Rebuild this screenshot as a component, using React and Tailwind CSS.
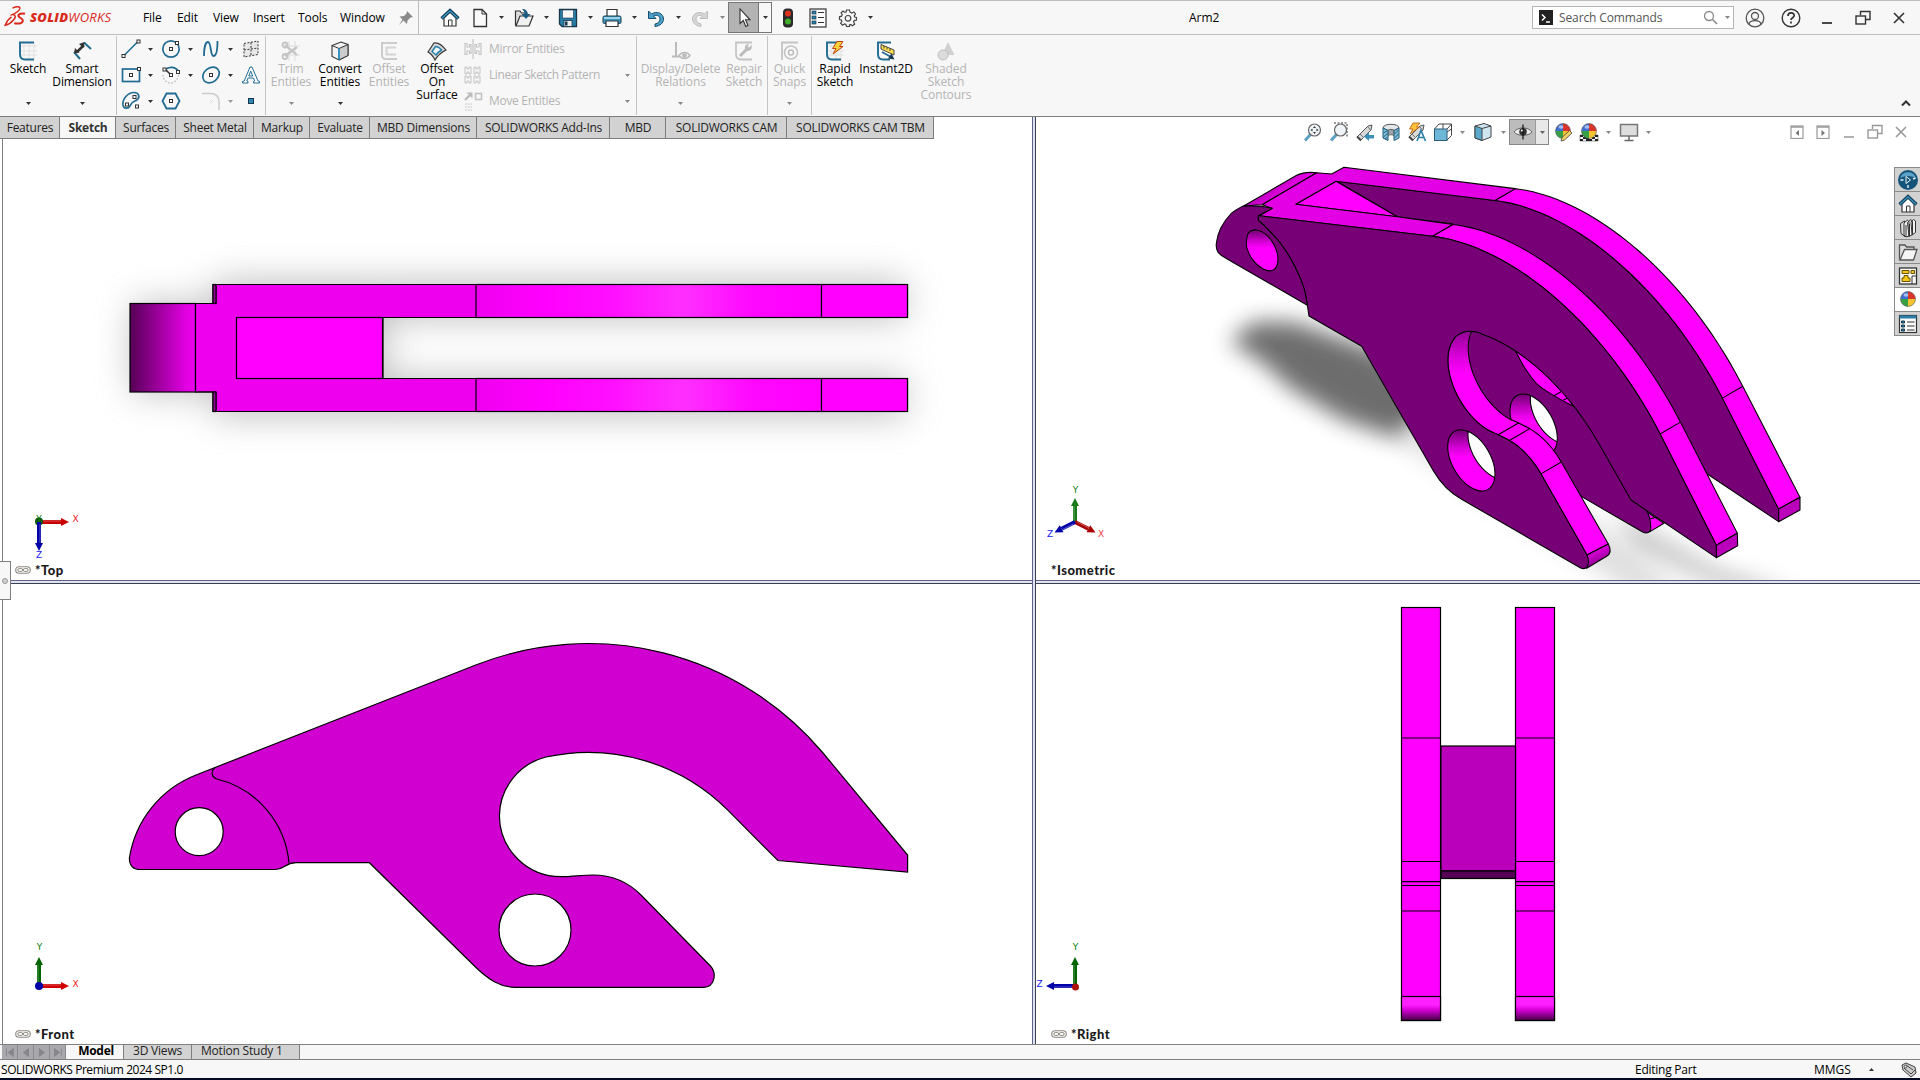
import React from "react";

/* ---------- helpers ---------- */

// Smooth open curve (Catmull-Rom turned into cubic segments) through a list of points.
function curve(pts, join = "M") {
  let d = `${join}${pts[0][0]} ${pts[0][1]}`;
  for (let i = 0; i < pts.length - 1; i++) {
    const p0 = pts[i - 1] || pts[i];
    const p1 = pts[i];
    const p2 = pts[i + 1];
    const p3 = pts[i + 2] || p2;
    d += `C${p1[0] + (p2[0] - p0[0]) / 6} ${p1[1] + (p2[1] - p0[1]) / 6} ${p2[0] - (p3[0] - p1[0]) / 6} ${p2[1] - (p3[1] - p1[1]) / 6} ${p2[0]} ${p2[1]}`;
  }
  return d;
}
const rev = (a) => [...a].reverse();
const shift = (a, dx, dy) => a.map(([x, y]) => [x + dx, y + dy]);

// Points of a circular arc in the plane of the front profile, angles in degrees.
function arc(cx, cy, r, a0, a1, n = 14) {
  return Array.from({ length: n + 1 }, (_, i) => {
    const a = ((a0 + ((a1 - a0) * i) / n) * Math.PI) / 180;
    return [cx + r * Math.cos(a), cy + r * Math.sin(a)];
  });
}
// Front profile plane -> isometric drawing plane.
const toIso = (pts) =>
  pts.map(([x, y]) => [698 + 1.973 * (x - 476.4), 259 + 1.139 * (x - 476.4) + 2.282 * (y - 664.8)]);

function Caret({ className = "text-[#333]" }) {
  return (
    <svg width="5" height="3" viewBox="0 0 5 3" className={"shrink-0 " + className}>
      <path d="M0 0H5L2.5 3Z" fill="currentColor" />
    </svg>
  );
}

function Ico({ s = 20, vb = 20, children, className = "" }) {
  return (
    <svg width={s} height={s} viewBox={`0 0 ${vb} ${vb}`} fill="none" className={"shrink-0 " + className}>
      {children}
    </svg>
  );
}

/* ---------- icons ---------- */
const B = "#226c93";
const K = "#333";

const Home = ({ s = 20 }) => (
  <Ico s={s}>
    <path d="M4 10V18H16V10L10 4Z" fill="#fff" stroke={K} strokeWidth="1.2" />
    <path d="M8.5 18V12H12V18" stroke={K} />
    <path d="M1.5 10.5L10 2.5L18.5 10.5" stroke="#123e58" strokeWidth="3.2" />
    <path d="M2 10.3L10 2.8L18 10.3" stroke="#3b9ac4" strokeWidth="1.2" />
  </Ico>
);
const Doc = () => (
  <Ico>
    <path d="M4 1.5H12L16.5 6V18.5H4Z" fill="#fafafa" stroke={K} strokeWidth="1.3" />
    <path d="M12 1.5V6H16.5" stroke={K} strokeWidth="1" />
  </Ico>
);
const Open = () => (
  <Ico>
    <path d="M1.5 17.5V3H6L7.5 5H13V8" fill="#ddd" stroke={K} strokeWidth="1.2" />
    <path d="M2 18L6 8H19L15 18Z" fill="#f1f1f1" stroke={K} strokeWidth="1.2" />
    <path d="M8 1C12 1 13.500 3 13.500 6H16.500L12 11L7.500 6H10.500C10.500 4 10 2.500 8 1Z" fill="#1c5c82" />
  </Ico>
);
const Save = () => (
  <Ico>
    <path d="M1.500 1.500H18.500V18.500H4L1.500 16Z" fill="#2a7fa8" stroke="#17384c" strokeWidth="1.300" />
    <rect x="4.500" y="2" width="11" height="8" fill="#fafafa" stroke="#17384c" strokeWidth=".6" />
    <rect x="6" y="12.500" width="8" height="6" fill="#eee" stroke="#17384c" strokeWidth=".8" />
    <rect x="7" y="13.500" width="2.500" height="4" fill="#17384c" />
  </Ico>
);
const Print = () => (
  <Ico>
    <path d="M5 8V1.500H15V8" fill="#fff" stroke={K} strokeWidth="1.200" />
    <rect x="1" y="8" width="18" height="7.500" rx="1.500" fill="#3b9ac4" stroke="#17384c" />
    <path d="M2 10H18" stroke="#bfe2f2" strokeWidth="1.500" />
    <path d="M4 13H16V18.500H4Z" fill="#fff" stroke={K} strokeWidth="1.200" />
  </Ico>
);
const Undo = ({ gray }) => (
  <Ico className={gray ? "-scale-x-100" : ""}>
    <path
      d="M2.500 3V10.500H10L7.500 8C11 6 14 8 14 11C14 13.500 12 15.500 9 16V18.500C14 18 17.500 15 17.500 11C17.500 5.500 11 2.500 5.500 6Z"
      fill={gray ? "#d6d6d6" : "#4aa3cc"}
      stroke={gray ? "#bdbdbd" : "#1c4d69"}
    />
  </Ico>
);
const Cursor = () => (
  <Ico>
    <path d="M6 1V15.500L9.300 12.500L11.800 18.500L14 17.500L11.500 11.800H16Z" fill="#fff" stroke="#333" strokeWidth="1.100" />
  </Ico>
);
const Lights = () => (
  <Ico>
    <rect x="5" y=".5" width="10" height="19" rx="4" fill="#2b2b2b" />
    <circle cx="10" cy="5.500" r="3" fill="#e0301e" />
    <circle cx="10" cy="13.500" r="3" fill="#3fae2a" />
  </Ico>
);
const Props = () => (
  <Ico>
    <rect x="2" y="1" width="16" height="18" fill="#fdfdfd" stroke={K} strokeWidth="1.200" />
    {[4, 9, 14].map((y) => (
      <g key={y}>
        <rect x="4" y={y - 1} width="4" height="3" fill="#2a7fa8" stroke="#17384c" strokeWidth=".7" />
        <path d={`M10 ${y + 0.5}H16`} stroke={K} />
      </g>
    ))}
  </Ico>
);
const Gear = () => (
  <Ico>
    <path
      d="M8.500 2H11.500L12.100 4.200L13.800 5L15.900 3.900L17.500 6L16.200 7.900L16.700 9L18.500 9.500V12L16.200 12.600L15.600 14L16.700 16L14.500 17.800L12.700 16.500L11.500 17V18.500H8.500L7.900 16.500L6.500 16L4.500 17.200L2.700 15.200L3.900 13.300L3.300 12L1.500 11.500V8.800L3.600 8.200L4.200 6.800L3.100 4.900L5 3L7 4.400L8 4Z"
      stroke="#444"
      strokeWidth="1.200"
    />
    <circle cx="10" cy="10.300" r="2.800" stroke="#444" strokeWidth="1.200" />
  </Ico>
);
const Pt = ({ x, y }) => <rect x={x - 1.5} y={y - 1.5} width="3" height="3" fill="#fff" stroke={K} />;

const LineI = () => (
  <Ico>
    <path d="M2.500 17L17.500 2" stroke={B} strokeWidth="1.600" />
    <Pt x={2.5} y={17} />
    <Pt x={17.5} y={2.5} />
  </Ico>
);
const CircleI = () => (
  <Ico>
    <circle cx="10" cy="10" r="8.200" stroke={B} strokeWidth="1.700" />
    <Pt x={10} y={10} />
    <Pt x={16} y={4} />
  </Ico>
);
const SplineI = () => (
  <Ico>
    <path d="M3 17C3 9 4.500 3 7 3C10.500 3 9 17 12.500 17C15.500 17 16.500 10 16.500 2" stroke={B} strokeWidth="1.800" />
  </Ico>
);
const PlaneI = () => (
  <Ico>
    <path d="M3 4.500L17 2V15.500L3 18Z" fill="#e8e8e8" stroke={K} strokeDasharray="2 1.500" />
    <path d="M10 3.500V17M3 11L17 9" stroke={K} strokeDasharray="2 1.500" />
  </Ico>
);
const RectI = () => (
  <Ico>
    <rect x="1.500" y="4" width="17" height="12.500" stroke={B} strokeWidth="1.700" />
    <Pt x={10} y={10} />
    <Pt x={18} y={4} />
  </Ico>
);
const ArcI = () => (
  <Ico>
    <path d="M4 5C8 1 15 1.500 17.500 7" stroke={B} strokeWidth="1.700" />
    <path d="M17.500 10C17 15 13 18 9.500 18C5.500 18 2 14.500 2 10" stroke="#bbb" strokeWidth="1.400" strokeDasharray="1.500 1.800" />
    <path d="M4 4L9 9" stroke={K} strokeWidth="1.600" />
    <Pt x={3.5} y={4.5} />
    <Pt x={10} y={10} />
    <Pt x={17} y={7} />
  </Ico>
);
const EllI = () => (
  <Ico>
    <ellipse cx="10" cy="10" rx="9" ry="7" transform="rotate(-40 10 10)" stroke={B} strokeWidth="1.700" />
    <Pt x={10} y={10} />
  </Ico>
);
const TextI = () => (
  <Ico>
    <path d="M1.500 18H7V16.500L5.800 16L7 13H12.500L13.700 16L12.500 16.500V18H18.500V16.500L17 16L11 2H9L3.200 16L1.500 16.500ZM7.800 11L9.700 6L11.700 11Z" fill="#fff" stroke={B} />
  </Ico>
);
const SlotI = () => (
  <Ico>
    <path d="M2 14C1 8 7 1.500 13 1.500C18 1.500 19 6 16.500 8.500C14 10.500 11 10.500 9.500 14C8 18 3 18.500 2 14Z" stroke={B} strokeWidth="1.700" />
    <Pt x={13.500} y={6} />
    <Pt x={6} y={13.500} />
    <Pt x={16} y={15.500} />
  </Ico>
);
const HexI = () => (
  <Ico>
    <path d="M5.500 2.500H14.500L18.500 10L14.500 17.500H5.500L1.500 10Z" stroke={B} strokeWidth="1.800" />
    <Pt x={10} y={10} />
  </Ico>
);
const FilletI = () => (
  <Ico>
    <path d="M1 2.500H9C15 2.500 18 6 18 11V19" stroke="#ccc" strokeWidth="1.600" />
    <path d="M9 9L12 12M12 9L9 12" stroke="#ddd" />
  </Ico>
);
const DotI = () => (
  <Ico>
    <rect x="7.500" y="7.500" width="5" height="5" fill="#2f88b3" stroke="#17384c" />
  </Ico>
);

const SketchI = ({ children }) => (
  <Ico>
    <path d="M6 1V14M11 1V19M16 1V19M3 5H19M3 10H19M3 14H19" stroke="#ddd" strokeWidth=".8" />
    <path d="M16 1.500H2V13C2 16.500 3.500 18.500 7 18.500H16" stroke={B} strokeWidth="1.900" />
    {children}
  </Ico>
);
const SmartI = () => (
  <Ico>
    <path d="M2 11L8 18M12 1.500L19 8" stroke={B} strokeWidth="2" />
    <path d="M5 11L12 4" stroke={K} strokeWidth="2.500" />
    <path d="M2 12.500L3 7L7.500 11.500ZM12.500 1L11.500 7L7 3Z" fill={K} />
  </Ico>
);
const TrimI = () => (
  <Ico>
    <path d="M1 5H19M1 14H19M8 0V20M14 0V20" stroke="#ddd" />
    <path d="M4 4L16 14M4 15L16 6" stroke="#c4c4c4" strokeWidth="2.200" />
    <circle cx="4" cy="4" r="2.500" stroke="#c4c4c4" strokeWidth="1.800" />
    <circle cx="4" cy="15.500" r="2.500" stroke="#c4c4c4" strokeWidth="1.800" />
  </Ico>
);
const ConvertI = () => (
  <Ico>
    <path d="M2 4.500L11 1L18 3.500V14.500L9 19L2 15.500Z" fill="#f2f2f2" stroke={K} strokeWidth="1.100" />
    <path d="M9 7.500L18 3.500V14.500L9 19Z" fill="#ccc" stroke={K} />
    <path d="M2 4.500L9 7.500V19" stroke={K} />
    <path d="M9 7.500V18.500" stroke="#2f9bd0" strokeWidth="1.800" />
  </Ico>
);
const OffsetI = () => (
  <Ico>
    <path d="M18 2H3V14C3 17 4 18 7 18H18" stroke="#ccc" strokeWidth="2" />
    <path d="M17 6.500H7.500V13.500H17" stroke="#d4d4d4" strokeWidth="2" />
  </Ico>
);
const OffSurfI = () => (
  <Ico>
    <path d="M1 11L7 2C11 1 15 4 19 9C15 11 11 14 8 19C6 15 4 12.500 1 11Z" fill="#d9d9d9" stroke={K} strokeWidth="1.200" />
    <path d="M5 10.500L8.500 5.500C11 5.500 13 7 14.500 9C12 10.500 10.500 12 9 14Z" fill="#eef6fa" stroke="#2a7fa8" strokeWidth="1.500" />
  </Ico>
);
const MirrorI = () => (
  <Ico>
    <path d="M10 0V20" stroke="#bbb" />
    <path d="M2 4.500H4V8H6.500V5.500H8V14.500H6.500V12H4V15.500H2ZM18 4.500H16V8H13.500V5.500H12V14.500H13.500V12H16V15.500H18Z" stroke="#c4c4c4" strokeWidth="1.100" />
  </Ico>
);
const PatternI = () => (
  <Ico>
    {[
      [2, 2],
      [11, 2],
      [2, 11],
      [11, 11],
    ].map(([x, y]) => (
      <path key={x + "-" + y} d={`M${x} ${y}h2v2h2v-2h2v7h-2v-2h-2v2h-2Z`} stroke="#c4c4c4" />
    ))}
  </Ico>
);
const MoveI = () => (
  <Ico>
    <path d="M2 9L7 4" stroke="#bbb" strokeWidth="2.400" />
    <path d="M3.500 1.500H9.500V7.500Z" fill="#bbb" />
    <rect x="12.500" y="2.500" width="6" height="6" stroke="#c4c4c4" strokeWidth="1.600" />
    <path d="M2 13H9M2 16H9M2 19H9" stroke="#ddd" strokeWidth="1.800" strokeDasharray="1.800 1" />
  </Ico>
);
const RelI = () => (
  <Ico>
    <path d="M1 15.500H9M5 15.500V1" stroke="#bbb" strokeWidth="2" />
    <path d="M8 14.500C11 10.500 16 10.500 19 14.500C16 18.500 11 18.500 8 14.500Z" fill="#f7f7f7" stroke="#bbb" strokeWidth="1.300" />
    <circle cx="13.500" cy="14.500" r="2.300" fill="#bbb" />
  </Ico>
);
const RepairI = () => (
  <Ico>
    <path d="M18 1.500H2V13C2 16.500 3.500 18.500 7 18.500H18" stroke="#c4c4c4" strokeWidth="1.800" />
    <path d="M6 15L13 8" stroke="#bbb" strokeWidth="3" />
    <path d="M17.500 4L15 6.500L13.500 5.500L15 3C12 3 10.500 5 11 8C12 10.500 15.500 10.500 17 8.500C18 7 18 5 17.500 4Z" fill="#bbb" />
  </Ico>
);
const SnapI = () => (
  <Ico>
    <path d="M1 1.500H18M2 1V19" stroke="#c4c4c4" strokeWidth="1.800" />
    <circle cx="11" cy="11.500" r="6.500" stroke="#c4c4c4" strokeWidth="1.600" />
    <circle cx="11" cy="11.500" r="2.500" stroke="#bbb" strokeWidth="1.400" />
  </Ico>
);
const RapidI = () => (
  <SketchI>
    <path d="M12 .5H18L14.500 5.500H18L8 13L11 7.500H7.500Z" fill="#ffd23c" stroke="#c2410c" strokeWidth="1" />
  </SketchI>
);
const Inst2I = () => (
  <Ico>
    <path d="M15 1.500H2V13C2 16.500 3.500 18.500 7 18.500H14" stroke={B} strokeWidth="1.900" />
    <path d="M5 3.500L18 9V14L5 8Z" fill="#ffdf52" stroke={K} strokeWidth=".9" />
    <path d="M8 5V7.500M11 6.300V8.500M14 7.500V10" stroke={K} strokeWidth=".9" />
    <path d="M6 11L15 16" stroke={B} strokeWidth="1.800" />
    <path d="M18.500 18.500L12 17.500L15.500 12.500Z" fill="#17384c" />
  </Ico>
);
const ShadedI = () => (
  <Ico>
    <path d="M12 1L18.500 14H6Z" fill="#d0d0d0" />
    <circle cx="7" cy="14" r="5" fill="#dcdcdc" stroke="#c0c0c0" />
  </Ico>
);

/* heads-up toolbar icons */
const Lens = ({ dashed }) => (
  <Ico>
    {dashed && <path d="M5 1H18V15" stroke={K} strokeDasharray="2 1.500" />}
    <path d="M7.500 12.500L2 18.500" stroke="#5d9fc0" strokeWidth="3" />
    <circle cx="11.500" cy="8" r="6" fill="#eef4f7" stroke="#666" strokeWidth="1.200" />
    {!dashed && <path d="M11.500 4L13 6H10ZM11.500 12L13 10H10ZM7.500 8L9.500 6.500V9.500ZM15.500 8L13.500 6.500V9.500Z" fill="#333" />}
  </Ico>
);
const Scope = ({ annot }) => (
  <Ico>
    <path d="M2 15L13 4L17 3L16 8L6 18Z" fill="#d8d8d8" stroke="#555" />
    <path d="M5 12L9 16M12.500 4.500L15.500 8" stroke="#777" />
    <path d="M2 14.500L6 18.500" stroke="#444" strokeWidth="2" />
    {annot ? (
      <>
        <path d="M6 1L13 1L9.500 5H12.500L3 12L6 7H2.500Z" fill="#ffc43c" stroke="#b45309" strokeWidth=".8" />
        <path d="M10 19L14 8.500L18.500 19M12 15.500H17" stroke="#2a7fa8" strokeWidth="1.600" />
      </>
    ) : (
      <path d="M19 13V16.500H14V19L9 14.800L14 10.500V13Z" fill="#3b8fb8" />
    )}
  </Ico>
);
const SectionI = () => (
  <Ico>
    <path d="M2 6C2 1 18 1 18 6L13 8.500C12 7 8 7 7 8.500Z" fill="#e4e7e9" stroke="#555" />
    <path d="M7 8.500C8 7 12 7 13 8.500V14C12 12.500 8 12.500 7 14Z" fill="#9aa3a8" stroke="#555" strokeWidth=".6" />
    <path d="M2 6L7 8.500V18.500L2 16ZM13 8.500L18 6V16L13 18.500Z" fill="#7fbfdb" stroke="#235a77" />
    <path d="M2.500 11L6.500 8.500M2.500 15L6.500 11.500M4 17L6.500 15M13.500 12L17.500 8M13.500 16L17.500 12" stroke="#235a77" />
  </Ico>
);
const OrientI = () => (
  <Ico>
    <path d="M6 2H18.500V13.500L14 18" stroke="#444" />
    <path d="M1.500 7L6 2M14 7L18.500 2M10 2V7M14 10L18.500 7" stroke="#444" />
    <rect x="1.500" y="7" width="12.500" height="11.500" fill="#6fb7d8" stroke="#2b5d77" />
  </Ico>
);
const StyleI = () => (
  <Ico>
    <path d="M2 4L11 1.500L18 4V15L9 18.500L2 16Z" fill="#cfe6f0" stroke="#444" />
    <path d="M2 4L9 6.500V18.500L2 16Z" fill="#5aa9cc" stroke="#444" />
    <path d="M9 6.500L18 4" stroke="#444" />
  </Ico>
);
const EyeI = () => (
  <Ico>
    <path d="M1 10C5 4.500 15 4.500 19 10C15 14.500 5 14.500 1 10Z" fill="#eee" stroke="#666" />
    <circle cx="10" cy="9.700" r="3.800" fill="#333" />
    <path d="M10 2.500V17.500" stroke="#111" strokeWidth="1.200" />
    <circle cx="8.800" cy="8.500" r="1" fill="#fff" />
  </Ico>
);
const Ball = ({ s = 20, mode }) => (
  <Ico s={s}>
    {mode === "scene" && (
      <>
        <path d="M1 13H19V19H1Z" fill="#fff" stroke="#555" strokeWidth=".6" />
        <path d="M1 13H4V15H1ZM7 15H10V17H7ZM4 15H7V17H4V19H1V17H4ZM7 17H10V19H7ZM13 15H16V17H13ZM16 13H19V15H16ZM10 17H13V19H10ZM16 17H19V19H16Z" fill="#222" />
      </>
    )}
    <path d="M10 9V1.500A7.500 7.500 0 0 1 17.500 9Z" fill="#d9342b" />
    <path d="M10 9H17.500A7.500 7.500 0 0 1 10 16.500Z" fill="#f2c230" />
    <path d="M10 9V16.500A7.500 7.500 0 0 1 2.500 9Z" fill="#36a042" />
    <path d="M10 9H2.500A7.500 7.500 0 0 1 10 1.500Z" fill="#3f6fd0" />
    <circle cx="10" cy="9" r="7.500" stroke="#555" strokeWidth=".6" />
    <ellipse cx="8" cy="5" rx="2.500" ry="1.800" fill="#fff" opacity=".55" />
    {mode === "edit" && <path d="M8 19L9 15.500L16.500 8.500L19 11L11.500 18Z" fill="#f2cf63" stroke="#444" strokeWidth=".8" />}
  </Ico>
);
const MonitorI = () => (
  <Ico>
    <rect x="1.500" y="2.500" width="17" height="11.500" fill="#ddd" stroke="#777" strokeWidth="1.500" />
    <path d="M10 14V18M5.500 18.500H14.500" stroke="#666" strokeWidth="1.500" />
  </Ico>
);
const Restore = ({ c = "#333" }) => (
  <Ico s={16} vb={16}>
    <path d="M5.500 5V1.500H15V9.500H11" stroke={c} strokeWidth="1.400" />
    <rect x="1" y="6" width="9.500" height="8" stroke={c} strokeWidth="1.400" />
  </Ico>
);
const Close = ({ c = "#333" }) => (
  <Ico s={14} vb={14}>
    <path d="M2 2L12 12M12 2L2 12" stroke={c} strokeWidth="1.600" />
  </Ico>
);
const Minimize = ({ c = "#333" }) => (
  <Ico s={14} vb={14}>
    <path d="M2 12H12" stroke={c} strokeWidth="1.800" />
  </Ico>
);

/* ---------- title bar ---------- */
function Cell({ w, children, className = "" }) {
  return (
    <div className={"flex h-full shrink-0 items-center justify-center " + className} style={{ width: w }}>
      {children}
    </div>
  );
}

function TitleBar() {
  const menus = [
    ["File", 18, 16],
    ["Edit", 20, 16],
    ["View", 25, 15],
    ["Insert", 29, 16],
    ["Tools", 26, 16],
    ["Window", 44, 2],
  ];
  return (
    <div className="flex h-[35px] items-center border-t border-b border-[#bdbdbd] bg-[#f7f7f7] text-[12px] text-black">
      <div className="flex w-[143px] shrink-0 items-center pl-[4px]">
        <svg width="22" height="24" viewBox="0 0 22 24" fill="none" className="shrink-0">
          <path d="M8.500 2.200C11 .8 15 0 15.800 1.600C16.500 3.500 12.500 7.500 6.500 9.300" stroke="#d9291c" strokeWidth="1.400" />
          <path d="M8.800 8.600C12 9 12 11.500 9.500 14C7.500 16.500 4.500 18.500 1.200 19.200C2.600 15.500 4.500 12.800 7.500 10.800" stroke="#d9291c" strokeWidth="1.500" />
          <path d="M21 7.800C18 6.900 14.200 7.800 14.400 9.800C14.600 11.900 19.400 12.400 18.800 14.900C18.100 17.600 13.500 17.700 10.200 17.200" stroke="#d9291c" strokeWidth="2" />
        </svg>
        <div className="ml-[4px] whitespace-nowrap font-['Open_Sans',sans-serif] text-[13px] leading-none tracking-[0.25px] italic text-[#d9291c]">
          <span className="font-extrabold">SOLID</span>
          <span className="font-normal">WORKS</span>
        </div>
      </div>
      {menus.map(([m, w, g]) => (
        <div key={m} className="shrink-0 whitespace-nowrap tracking-[-0.1px]" style={{ width: w, marginRight: g }}>
          {m}
        </div>
      ))}
      <Cell w={32} className="pl-[8px]">
        <Ico s={16} vb={16}>
          <path d="M9 1L15 7L12.500 7.500L9.500 10.500L9 14L5.500 10.500L1 15L4.500 9.500L1.500 6.500L6 6L8.500 3.500Z" fill="#8a8a8a" />
        </Ico>
      </Cell>
      <div className="h-full w-px shrink-0 bg-[#bdbdbd]" />
      <Cell w={31} className="ml-[15px]"><Home /></Cell>
      <Cell w={30}><Doc /></Cell>
      <Cell w={12}><Caret /></Cell>
      <Cell w={33}><Open /></Cell>
      <Cell w={12}><Caret /></Cell>
      <Cell w={32}><Save /></Cell>
      <Cell w={12}><Caret /></Cell>
      <Cell w={32}><Print /></Cell>
      <Cell w={12}><Caret /></Cell>
      <Cell w={32}><Undo /></Cell>
      <Cell w={12}><Caret /></Cell>
      <Cell w={32}><Undo gray /></Cell>
      <Cell w={12}><Caret className="text-[#888]" /></Cell>
      <div className="flex h-[31px] w-[44px] shrink-0 border border-[#777] bg-[#f7f7f7]">
        <div className="flex w-[30px] items-center justify-center border-r border-[#777] bg-[#b3b3b3]"><Cursor /></div>
        <div className="flex flex-1 items-center justify-center"><Caret /></div>
      </div>
      <Cell w={31}><Lights /></Cell>
      <Cell w={30}><Props /></Cell>
      <Cell w={30}><Gear /></Cell>
      <Cell w={14}><Caret /></Cell>
      <div className="flex-1 pl-[312px]">Arm2</div>
      <div className="flex h-[23px] w-[202px] shrink-0 items-center border border-[#b5b5b5] bg-white">
        <div className="ml-[6px] flex h-[15px] w-[14px] items-center justify-center bg-[#222]">
          <Ico s={12} vb={12}>
            <path d="M2 2.500L5 5.500L2 8.500M6 10H10" stroke="#fff" strokeWidth="1.500" />
          </Ico>
        </div>
        <div className="ml-[6px] flex-1 text-[12px] tracking-[-0.12px] text-[#555]">Search Commands</div>
        <Ico s={15} vb={15}>
          <circle cx="6" cy="6" r="4.500" stroke="#888" strokeWidth="1.300" />
          <path d="M9.500 9.500L14 14" stroke="#888" strokeWidth="1.600" />
        </Ico>
        <div className="ml-[7px] mr-[3px]"><Caret className="text-[#888]" /></div>
      </div>
      <Cell w={36} className="ml-[3px]">
        <Ico>
          <circle cx="10" cy="10" r="8.800" stroke="#555" strokeWidth="1.300" />
          <circle cx="10" cy="8" r="3.500" stroke="#555" strokeWidth="1.300" />
          <path d="M4 16C5 11.500 15 11.500 16 16" stroke="#555" strokeWidth="1.300" />
        </Ico>
      </Cell>
      <Cell w={36}>
        <Ico>
          <circle cx="10" cy="10" r="8.800" stroke="#333" strokeWidth="1.400" />
          <path d="M7 8C7 4 13.200 4 13.200 7.500C13.200 9.800 10 9.800 10 12M10 13.500V15.500" stroke="#333" strokeWidth="1.700" />
        </Ico>
      </Cell>
      <Cell w={36}><Minimize /></Cell>
      <Cell w={36}><Restore /></Cell>
      <Cell w={36}><Close /></Cell>
      <div className="w-[3px] shrink-0" />
    </div>
  );
}

/* ---------- ribbon ---------- */
function RibbonButton({ w, icon, lines, off, caret }) {
  return (
    <div
      className={"flex h-full shrink-0 flex-col items-center pt-[6px] " + (off ? "text-[#b4b4b4]" : "text-black")}
      style={{ width: w }}
    >
      {icon}
      <div className="h-[40px] whitespace-nowrap pt-[1px] text-center text-[12px] leading-[13px] tracking-[-0.1px]">
        {lines.map((l) => (
          <div key={l} className="flex justify-center">{l}</div>
        ))}
      </div>
      {caret && <div className="pt-px"><Caret className={off ? "text-[#888]" : "text-[#333]"} /></div>}
    </div>
  );
}
const Sep = ({ className = "" }) => <div className={"my-[1px] w-px shrink-0 bg-[#c4c4c4] " + className} />;

function Ribbon() {
  const tools = [
    [<LineI />, 1], [<CircleI />, 1], [<SplineI />, 1], [<PlaneI />, 0],
    [<RectI />, 1], [<ArcI />, 1], [<EllI />, 1], [<TextI />, 0],
    [<SlotI />, 1], [<HexI />, 0], [<FilletI />, 2], [<DotI />, 0],
  ];
  const list = [
    ["Mirror Entities", <MirrorI />, false],
    ["Linear Sketch Pattern", <PatternI />, true],
    ["Move Entities", <MoveI />, true],
  ];
  return (
    <div className="flex h-[82px] border-b border-[#7d7d7d] bg-[#f7f7f7]">
      <RibbonButton w={56} icon={<SketchI />} lines={["Sketch"]} caret />
      <RibbonButton w={52} icon={<SmartI />} lines={["Smart", "Dimension"]} caret />
      <Sep className="ml-[8px]" />
      <div className="grid w-[148px] shrink-0 grid-cols-[40px_40px_40px_28px] grid-rows-[26px_26px_26px] content-start pt-[1px]">
        {tools.map(([icon, c], i) => (
          <div key={i} className="flex items-center pl-[4px]">
            {icon}
            {c > 0 && <div className="ml-[7px]"><Caret className={c === 2 ? "text-[#999]" : "text-[#333]"} /></div>}
          </div>
        ))}
      </div>
      <Sep />
      <RibbonButton w={50} icon={<TrimI />} lines={["Trim", "Entities"]} off caret />
      <RibbonButton w={48} icon={<ConvertI />} lines={["Convert", "Entities"]} caret />
      <RibbonButton w={50} icon={<OffsetI />} lines={["Offset", "Entities"]} off />
      <RibbonButton w={46} icon={<OffSurfI />} lines={["Offset", "On", "Surface"]} />
      <div className="grid w-[176px] shrink-0 grid-rows-[26px_26px_26px] content-start pt-[1px] text-[12px] tracking-[-0.42px] text-[#b4b4b4]">
        {list.map(([t, icon, c]) => (
          <div key={t} className="flex items-center pr-[6px] pl-[3px]">
            {icon}
            <div className={"ml-[6px] flex-1 whitespace-nowrap " + (c && t[0] === "L" ? "" : "tracking-[-0.3px]")}>{t}</div>
            {c && <Caret className="text-[#888]" />}
          </div>
        ))}
      </div>
      <Sep />
      <RibbonButton w={87} icon={<RelI />} lines={["Display/Delete", "Relations"]} off caret />
      <RibbonButton w={40} icon={<RepairI />} lines={["Repair", "Sketch"]} off />
      <Sep className="ml-[3px]" />
      <RibbonButton w={43} icon={<SnapI />} lines={["Quick", "Snaps"]} off caret />
      <Sep />
      <RibbonButton w={46} icon={<RapidI />} lines={["Rapid", "Sketch"]} />
      <RibbonButton w={56} icon={<Inst2I />} lines={["Instant2D"]} />
      <RibbonButton w={64} icon={<ShadedI />} lines={["Shaded", "Sketch", "Contours"]} off />
      <div className="flex flex-1 items-end justify-end pr-[9px] pb-[8px]">
        <Ico s={10} vb={10}>
          <path d="M1 7.500L5 3.500L9 7.500" stroke="#333" strokeWidth="2" />
        </Ico>
      </div>
    </div>
  );
}

function CommandTabs() {
  const tabs = [
    ["Features", 60], ["Sketch", 56], ["Surfaces", 60], ["Sheet Metal", 78], ["Markup", 56], ["Evaluate", 60],
    ["MBD Dimensions", 107], ["SOLIDWORKS Add-Ins", 133], ["MBD", 56], ["SOLIDWORKS CAM", 121], ["SOLIDWORKS CAM TBM", 147],
  ];
  return (
    <div className="flex h-[22px] shrink-0 text-[12px] tracking-[-0.25px]">
      {tabs.map(([t, w]) => (
        <div
          key={t}
          style={{ width: w }}
          className={
            "flex shrink-0 items-center justify-center whitespace-nowrap border-r border-b border-[#7d7d7d] pl-[1px] " +
            (t === "Sketch" ? "bg-[#f7f7f7] font-bold text-[#333]" : "bg-[#d2d2d2] text-[#222]")
          }
        >
          {t}
        </div>
      ))}
    </div>
  );
}

/* ---------- orientation triads ---------- */
const AxisLabel = ({ x, y, c, children }) => (
  <text x={x} y={y} fill={c} fontSize="9" textAnchor="middle" fontFamily="'DejaVu Sans', sans-serif">
    {children}
  </text>
);
const Arrow = ({ x, y, a, c, l = 30 }) => (
  <g transform={`translate(${x} ${y}) rotate(${a})`}>
    <rect x="0" y="-2" width={l - 8} height="4" fill={c} />
    <path d={`M${l - 8} -4L${l} 0L${l - 8} 4Z`} fill={c} />
    <path d={`M2 -1H${l - 8}`} stroke="#fff" strokeWidth=".8" opacity=".4" />
  </g>
);

/* ---------- model views ---------- */
const edge = { stroke: "#000", strokeWidth: 1.2 };

function TopView() {
  return (
    <svg viewBox="3 139 1029 441" className="absolute inset-0 h-full w-full" fill="none">
      <defs>
        <linearGradient id="cyl">
          <stop offset="0" stopColor="#550055" />
          <stop offset=".5" stopColor="#a800a8" />
          <stop offset=".85" stopColor="#e000e0" />
          <stop offset="1" stopColor="#ee00ee" />
        </linearGradient>
        <linearGradient id="band">
          <stop offset="0" stopColor="#ee00ee" />
          <stop offset=".2" stopColor="#ff00ff" />
          <stop offset=".4" stopColor="#ff10ff" />
          <stop offset=".6" stopColor="#ff30ff" />
          <stop offset=".8" stopColor="#ff08ff" />
          <stop offset="1" stopColor="#ff00ff" />
        </linearGradient>
        <filter id="soft" x="-20%" y="-60%" width="140%" height="220%">
          <feGaussianBlur stdDeviation="18" />
        </filter>
      </defs>
      <path d="M133 303H214V281H905V319H385V377H905V416H214V393H133Z" fill="#999" opacity=".62" filter="url(#soft)" />
      <rect x="130" y="303.500" width="65.500" height="88.500" fill="url(#cyl)" {...edge} />
      <path d="M213 284.500H907.500V317.500H383V378.500H907.500V411.500H213V392H195.500V303.500H213Z" fill="#ee00ee" {...edge} />
      <rect x="476" y="284.500" width="345.500" height="33" fill="url(#band)" {...edge} />
      <rect x="476" y="378.500" width="345.500" height="33" fill="url(#band)" {...edge} />
      <rect x="821.500" y="284.500" width="86" height="33" fill="#ff00ff" {...edge} />
      <rect x="821.500" y="378.500" width="86" height="33" fill="#ff00ff" {...edge} />
      <rect x="236.500" y="317.500" width="146" height="61" fill="#ff00ff" {...edge} />
      <path d="M216 285V303.500H195.500M216 411V392H195.500" stroke="#000" />
      <rect x="213" y="284.500" width="3" height="19" fill="#990099" {...edge} />
      <rect x="213" y="392" width="3" height="19.500" fill="#990099" {...edge} />
      <Arrow x={39} y={522} a={0} c="#c80000" />
      <circle cx="39" cy="521.500" r="4" fill="#0a5a0a" />
      <Arrow x={39} y={522} a={90} c="#0000a8" l={29} />
      <AxisLabel x={39} y={522} c="#0a7a0a">Y</AxisLabel>
      <AxisLabel x={75.500} y={522} c="#f02020">X</AxisLabel>
      <AxisLabel x={39} y={558} c="#2020f0">Z</AxisLabel>
    </svg>
  );
}

function FrontView() {
  return (
    <svg viewBox="3 584 1029 460" className="absolute inset-0 h-full w-full" fill="none">
      <path
        fillRule="evenodd"
        fill="#d000d0"
        {...edge}
        d="M196 775L476.400 664.800A306 306 0 0 1 822.200 752L907.600 855V872L777.900 860.500L727.800 810.200A197.200 197.200 0 0 0 546 757A61.500 61.500 0 0 0 499.400 816A61.500 61.500 0 0 0 561 876.700C573 876.700 581 875 593 875C611 875 627 881 641 895L710.400 966C717.500 974 714 987.300 704 987.300H515C500 987.300 488 979 476 967.500L369.400 862.700H296C285 862.700 284 869.500 275.500 869.500H140C133 869.500 129.400 865 129.400 858A107 107 0 0 1 196 775ZM223.200 831.700A24 24 0 1 0 175.200 831.700A24 24 0 1 0 223.200 831.700ZM571 930A36 36 0 1 0 499 930A36 36 0 1 0 571 930Z"
      />
      <path d="M214.600 768C211 771 211 777 217 779A95 95 0 0 1 289 863.300" {...edge} />
      <Arrow x={39} y={986} a={0} c="#d00000" />
      <Arrow x={39} y={986} a={-90} c="#006400" l={29} />
      <circle cx="39" cy="986" r="4" fill="#0000a8" />
      <AxisLabel x={39.500} y={950} c="#0a7a0a">Y</AxisLabel>
      <AxisLabel x={75.500} y={986.500} c="#f02020">X</AxisLabel>
    </svg>
  );
}

function RightView() {
  return (
    <svg viewBox="1036 584 884 460" className="absolute inset-0 h-full w-full" fill="none">
      <defs>
        <linearGradient id="tip" x1="0" x2="0" y1="0" y2="1">
          <stop offset="0" stopColor="#ff20ff" />
          <stop offset=".35" stopColor="#ff20ff" />
          <stop offset=".55" stopColor="#d800d8" />
          <stop offset="1" stopColor="#450045" />
        </linearGradient>
      </defs>
      <g stroke="#000" strokeWidth="1.200">
        {[1401.5, 1515.5].map((x) => (
          <g key={x}>
            <rect x={x} y="607.500" width="39" height="413" fill="#ff00ff" />
            <rect x={x} y="996.500" width="39" height="24" fill="url(#tip)" />
            <path d={`M${x} 738H${x + 39}M${x} 861.500H${x + 39}M${x} 881.700H${x + 39}M${x} 885.500H${x + 39}M${x} 911H${x + 39}`} />
          </g>
        ))}
        <rect x="1441" y="746" width="74.500" height="125" fill="#bb00bb" />
        <rect x="1441" y="871" width="74.500" height="7.500" fill="#550055" />
      </g>
      <Arrow x={1075} y={986} a={180} c="#0000a8" l={29} />
      <Arrow x={1075} y={986} a={-90} c="#006400" l={29} />
      <circle cx="1075.500" cy="987" r="3.500" fill="#b01010" />
      <AxisLabel x={1075.500} y={950} c="#0a7a0a">Y</AxisLabel>
      <AxisLabel x={1039.500} y={987} c="#2020f0">Z</AxisLabel>
    </svg>
  );
}

// Isometric geometry, derived from the arcs of the front profile.
const RIM = [61, -35.5];
const FAR = [187, -107.5];
const frontIn = toIso(arc(588.5, 949.5, 306, -111.5, -40.2, 20));
const frontOut = shift(frontIn, ...RIM);
const backIn = shift(frontIn, ...FAR);
const backOut = shift(backIn, ...RIM);
const slotTop = toIso(arc(588.5, 949.5, 197.2, -45, -101.5, 14));
const slotLeft = toIso([...arc(561, 816, 61.5, -108, -270, 16), [576, 876], [592, 875]]);
const legTop = toIso(arc(593, 943, 68, -90, -45, 6));
const innerEdge = shift(slotLeft.slice(0, 19), ...RIM);
const rimTop = shift(legTop, ...RIM);
const nearHole = toIso(arc(535.2, 930, 36, 0, 360, 24));
const farHole = shift(nearHole, ...FAR);
const last = (a) => a[a.length - 1];
const at = (p) => `${p[0]} ${p[1]}`;

function Bore({ id, pts }) {
  const ds = { stroke: "#000", strokeWidth: 3.2 };
  return (
    <g>
      <clipPath id={id}>
        <path d={`${curve(pts)}Z`} />
      </clipPath>
      <path d={`${curve(pts)}Z`} fill="url(#wall)" />
      <g clipPath={`url(#${id})`}>
        <path d={`${curve(shift(pts, ...RIM))}Z`} fill="#fdfdfd" {...ds} />
      </g>
      <path d={`${curve(pts)}Z`} {...ds} />
    </g>
  );
}

function IsoView() {
  const headArc = [[175, 197], [176, 212], [195, 229], [245, 285], [285, 350], [312, 415], [322, 466], [327, 498]];
  const headLeft = [[127, 169], [92, 192], [62, 235], [49, 280], [54, 307], [75, 323]];
  const ds = { stroke: "#000", strokeWidth: 3.2, strokeLinejoin: "round" };
  const M = "#ff00ff";
  const D = "#770077";
  const inEnd = last(frontIn);
  const outEnd = last(frontOut);
  const bInEnd = last(backIn);
  const bOutEnd = last(backOut);
  const legEnd = last(legTop);
  const rimEnd = last(rimTop);
  return (
    <svg viewBox="1036 117 884 463" className="absolute inset-0 h-full w-full" fill="none">
      <defs>
        <linearGradient id="wall" x1="0" x2="0" y1="0" y2="1">
          <stop offset="0" stopColor="#700070" />
          <stop offset=".3" stopColor="#d800d8" />
          <stop offset=".45" stopColor={M} />
        </linearGradient>
        <linearGradient id="nose" x1="0" x2="1" y1="0" y2=".6">
          <stop offset=".2" stopColor="#900090" />
          <stop offset=".7" stopColor="#e600e6" />
        </linearGradient>
        <linearGradient id="toe" x1="0" x2=".4" y1="0" y2="1">
          <stop offset=".1" stopColor={M} />
          <stop offset="1" stopColor="#800080" />
        </linearGradient>
        <filter id="blur1" x="-40%" y="-40%" width="180%" height="180%">
          <feGaussianBlur stdDeviation="34" />
        </filter>
      </defs>
      <g transform="translate(1200 150) scale(.33333)">
        <path d="M90 575L160 515L280 515L540 605L720 740L590 865L430 810L270 715L190 640Z" fill="#666" opacity=".95" filter="url(#blur1)" />
        <path d="M560 850L1300 1330H1450L1150 1090L700 850Z" fill="#999" opacity=".32" filter="url(#blur1)" />
        <path d="M1240 1080L1560 1260L1800 1330H1600L1300 1190Z" fill="#888" opacity=".5" filter="url(#blur1)" />

        {/* far arm */}
        <path d={`M410 94${curve(backIn, "L")}L1736 1077V1115L1522 972L1300 700L757 221L592 200Z`} fill={D} {...ds} />
        <path d={`${curve(backOut)}L1800 1042L1736 1077${curve(rev(backIn), "L")}Z`} fill={M} {...ds} />
        <path d="M1736 1077L1800 1042V1080L1736 1115Z" fill="#bb00bb" {...ds} />
        <path d={`M${at(bInEnd)}L${at(bOutEnd)}`} {...ds} />
        <path d="M1328 1077L1392 1120L1350 1145Z" fill={M} {...ds} />
        <path d="M1350 1107L1372 1100" {...ds} />
        <path d="M760 480L960 520L1160 740L1330 1065C1348 1090 1354 1110 1352 1140C1346 1150 1338 1151 1328 1146L1145 1040L935 820L760 700Z" fill={D} {...ds} />

        {/* slot interior */}
        <path d={`${curve([[945, 600], [975, 655], [1012, 703], [1062, 737], [1118, 768]])}L1100 720L1020 640Z`} fill={M} {...ds} />
        <path d="M1062 737L1083 725M1090 750L1102 745" {...ds} />
        <Bore id="farBore" pts={farHole} />
        <path d={`${curve(slotLeft)}L${at(last(innerEdge))}${curve(rev(innerEdge), "L")}Z`} fill="url(#wall)" {...ds} />
        <path
          d={`M${at(slotLeft[17])}${curve(legTop, "L")}L1161 1215L1225 1182L${at(rimEnd)}${curve(rev(rimTop), "L")}L${at(innerEdge[17])}Z`}
          fill={M}
          {...ds}
        />
        <path d="M1161 1215L1225 1182C1234 1200 1230 1213 1220 1219L1160 1255Z" fill="url(#toe)" {...ds} />
        <path d={`M${at(legTop[0])}L${at(rimTop[0])}M${at(legEnd)}L${at(rimEnd)}`} {...ds} />

        {/* top faces */}
        <path d="M408 94L287 163L592 200Z" fill={M} {...ds} />
        <path d="M127 170L290 76C310 66 330 66 350 68L187 164C160 165 140 167 127 170Z" fill="url(#nose)" {...ds} />
        <path
          d={`M350 68L395 72L432 52L${at(backOut[0])}L${at(backIn[0])}L408 94L287 163L592 200L${at(frontOut[0])}L${at(frontIn[0])}L178 197L217 175L187 164Z`}
          fill="#e400e4"
          {...ds}
        />
        <path d={`${curve(frontOut)}L1612 1150L1549 1186${curve(rev(frontIn), "L")}Z`} fill={M} {...ds} />
        <path d={`M${at(inEnd)}L${at(outEnd)}`} {...ds} />
        <path d="M1549 1186L1612 1150L1613 1187L1549 1223Z" fill="#bb00bb" {...ds} />

        {/* near face */}
        <path
          fillRule="evenodd"
          d={`M178 197${curve(frontIn, "L")}L1549 1186V1223L1293 1050${curve(slotTop, "L")}${curve(slotLeft, "L")}${curve(legTop, "L")}L1161 1215C1170 1240 1165 1262 1142 1254L785 1048C750 1028 722 1000 700 962L485 589L327 498${curve(rev(headArc), "L")}Z`}
          fill={D}
          {...ds}
        />
        <path d={`${curve(headLeft)}L322 466${curve(rev(headArc.slice(0, 7)), "L")}L217 175C190 168 150 167 127 169Z`} fill={D} {...ds} />
        <path d={`${curve([[139, 275], [146, 248], [170, 240], [202, 257], [228, 297], [233, 338], [218, 361], [188, 356], [157, 328], [141, 295], [139, 275]])}Z`} fill="url(#wall)" {...ds} />
        <Bore id="nearBore" pts={nearHole} />
      </g>
      <Arrow x={1075} y={523} a={-90} c="#187a18" l={25} />
      <Arrow x={1075} y={522} a={27} c="#a80000" l={23} />
      <Arrow x={1075} y={522} a={153} c="#0000a8" l={23} />
      <AxisLabel x={1075.500} y={493} c="#0a7a0a">Y</AxisLabel>
      <AxisLabel x={1101} y={537} c="#f04040">X</AxisLabel>
      <AxisLabel x={1050} y={537} c="#2020f0">Z</AxisLabel>
    </svg>
  );
}

const ViewLabel = ({ children, link = true, className = "" }) => (
  <div className={"absolute bottom-[2px] flex items-center font-['Lato',sans-serif] text-[13px] leading-[16px] font-black tracking-[0.45px] text-[#1a1a1a] " + className}>
    {link && (
      <svg width="16" height="8" viewBox="0 0 16 8" fill="none" className="mr-[4px]">
        <rect x=".7" y=".7" width="14.600" height="6.600" rx="3.300" stroke="#8a857c" strokeWidth="1.100" />
        <rect x="2.800" y="2.600" width="5" height="2.800" rx="1.400" stroke="#8a857c" />
        <rect x="8.200" y="2.600" width="5" height="2.800" rx="1.400" stroke="#8a857c" />
      </svg>
    )}
    {children}
  </div>
);

function HeadsUp() {
  return (
    <div className="absolute top-[1px] right-0 left-0 flex h-[28px] items-center">
      <div className="w-[264px] shrink-0" />
      <Cell w={26}><Lens /></Cell>
      <Cell w={26}><Lens dashed /></Cell>
      <Cell w={26}><Scope /></Cell>
      <Cell w={26}><SectionI /></Cell>
      <Cell w={26}><Scope annot /></Cell>
      <Cell w={26}><OrientI /></Cell>
      <Cell w={12}><Caret className="text-[#888]" /></Cell>
      <Cell w={30}><StyleI /></Cell>
      <Cell w={11}><Caret className="text-[#888]" /></Cell>
      <div className="flex h-[26px] w-[40px] shrink-0 border border-[#888] bg-[#e8e8e8]">
        <div className="flex w-[26px] items-center justify-center border-r border-[#999] bg-[#bcbcbc]"><EyeI /></div>
        <div className="flex flex-1 items-center justify-center"><Caret className="text-[#666]" /></div>
      </div>
      <Cell w={27}><Ball mode="edit" /></Cell>
      <Cell w={26}><Ball mode="scene" /></Cell>
      <Cell w={13}><Caret className="text-[#888]" /></Cell>
      <Cell w={28}><MonitorI /></Cell>
      <Cell w={11}><Caret className="text-[#888]" /></Cell>
      <div className="flex-1" />
      {["M9 5V11L5.500 8Z", "M5.500 5V11L9 8Z"].map((d) => (
        <Cell key={d} w={26}>
          <Ico s={14} vb={14}>
            <rect x="1" y="1" width="12" height="12.500" stroke="#999" strokeWidth="1.200" />
            <path d="M1 2H13" stroke="#999" strokeWidth="1.500" />
            <path d={d} fill="#777" />
          </Ico>
        </Cell>
      ))}
      <Cell w={26}><Minimize c="#aaa" /></Cell>
      <Cell w={26}><Restore c="#999" /></Cell>
      <Cell w={26}><Close c="#999" /></Cell>
      <div className="w-[6px] shrink-0" />
    </div>
  );
}

function TaskPane() {
  const items = [
    <Ico key="c" s={22} vb={22}>
      <circle cx="11" cy="11" r="10" fill="#14547a" />
      <path d="M3 9A8.500 8.500 0 0 1 19 9Q11 5 3 9Z" fill="#5ba3c8" />
      <path d="M9 7.500L13.500 11L9 14.500Z" stroke="#e8f4fa" fill="none" />
      <path d="M3.500 11H6.500M16 10L18.500 9M11 16V19" stroke="#e8f4fa" strokeWidth="1.400" />
    </Ico>,
    <Home key="h" />,
    <Ico key="b">
      <path d="M2.500 5.500L6.500 3L7 18.500L3 15.500Z" fill="#ddd" stroke={K} />
      <path d="M6 5L9.500 2L11 4V18L8 19L6 17ZM9.500 4.500L13 1.500L14.500 3.500V16.500L11 18.500ZM13 4L15.500 1.500L17.500 3V14.500L14 17Z" fill="#f2f2f2" stroke={K} />
      <path d="M8 7V19M11.500 6V18M14.500 5V16.500" stroke={K} />
    </Ico>,
    <Ico key="f">
      <path d="M1.500 17.500V3H7L8.500 5H16V8" fill="#ddd" stroke="#555" strokeWidth="1.300" />
      <path d="M2 18L6.500 7.500H19L15.500 18Z" fill="#f5f5f5" stroke="#555" strokeWidth="1.300" />
    </Ico>,
    <Ico key="v">
      <rect x="1.500" y="2" width="17" height="16" fill="#fafafa" stroke={K} strokeWidth="1.300" />
      <path d="M4 4.500H11V7.500H4ZM13 4.500H16.500V7.500H13ZM6 9.500H10V12H12V15.500H4V12H6Z" fill="#f5c518" stroke="#6b5200" />
      <path d="M14 10V18M14 10H18" stroke={K} />
    </Ico>,
    <Ball key="a" />,
    <Ico key="p">
      <rect x="1.500" y="1.500" width="17" height="17" fill="#fafafa" stroke={K} strokeWidth="1.200" />
      <path d="M1.500 3H18.500" stroke="#2a7fa8" strokeWidth="3" />
      <path d="M9 8H16.500M9 12H16.500M9 16H16.500" stroke={K} />
      <path d="M3.500 7H6.500V9H3.500ZM3.500 11H6.500V13H3.500ZM3.500 15H6.500V17H3.500Z" fill="#2a7fa8" stroke="#17384c" />
    </Ico>,
  ];
  return (
    <div className="absolute top-[50px] right-0 flex w-[26px] flex-col border-t border-l border-[#8a8a8a]">
      {items.map((it, i) => (
        <div key={i} className={"flex h-[24px] items-center justify-center border-b border-[#8a8a8a] " + (i === 5 ? "bg-white" : "bg-[#d2d2d2]")}>
          {it}
        </div>
      ))}
    </div>
  );
}

const HLine = () => (
  <div className="h-[4px] shrink-0 border-t border-b border-t-[#5f648c] border-b-[#3a3f55] bg-[#dfe3ee]" />
);

/* ---------- bottom ---------- */
function BottomTabs() {
  const nav = ["M4 3V12M12 3L6 7.500L12 12Z", "M11 3L5 7.500L11 12Z", "M5 3L11 7.500L5 12Z", "M4 3L10 7.500L4 12ZM12 3V12"];
  return (
    <div className="flex h-[16px] shrink-0 border-t border-b border-[#808080] bg-[#f7f7f7] text-[12px] leading-none text-[#222]">
      <div className="ml-[2px] flex bg-[#a9a9ad]">
        {nav.map((d) => (
          <div key={d} className="flex w-[16px] items-center justify-center border-r border-[#8a8a8e]">
            <svg width="15" height="13" viewBox="0 0 15 15" fill="#85858a" stroke="#85858a">
              <path d={d} />
            </svg>
          </div>
        ))}
      </div>
      <div className="flex w-[58px] items-center justify-center border-r border-[#808080] pb-[2px] pl-[3px] font-bold tracking-[-0.3px] text-black">Model</div>
      <div className="flex w-[68px] items-center justify-center border-r border-[#808080] bg-[#d2d2d2] pb-[2px] tracking-[-0.2px]">3D Views</div>
      <div className="flex w-[108px] items-center border-r border-[#808080] bg-[#d2d2d2] pb-[2px] pl-[9px] tracking-[-0.2px]">Motion Study 1</div>
    </div>
  );
}

function StatusBar() {
  return (
    <div className="flex h-[18px] shrink-0 items-center bg-[#f7f7f7] pt-px text-[12px] leading-none text-black">
      <div className="w-[1635px] shrink-0 pl-[1px] tracking-[-0.45px]">SOLIDWORKS Premium 2024 SP1.0</div>
      <div className="w-[179px] shrink-0 tracking-[-0.25px]">Editing Part</div>
      <div className="w-[55px] shrink-0">MMGS</div>
      <Caret className="rotate-180 text-[#333]" />
      <Ico s={16} vb={16} className="ml-[27px]">
        <path d="M1 3L5 1L14 5L15 11L10 15L2 8Z" fill="#ccc" stroke="#444" />
        <path d="M3 6L10 12L14 8M5 3L12 8" stroke="#444" />
        <circle cx="4.500" cy="4.500" r="1.300" fill="#fff" stroke="#444" />
      </Ico>
    </div>
  );
}

export default function App() {
  return (
    <div className="flex h-[1080px] w-[1920px] flex-col overflow-hidden bg-white font-['Open_Sans','Noto_Sans',sans-serif]">
      <TitleBar />
      <Ribbon />
      <div className="flex min-h-0 flex-1">
        <div className="relative flex w-[1032px] shrink-0 flex-col">
          <CommandTabs />
          <div className="relative ml-[2px] h-[441px] shrink-0 border-l border-[#808080]">
            <TopView />
            <ViewLabel className="left-[12px]">*Top</ViewLabel>
          </div>
          <HLine />
          <div className="relative ml-[2px] flex-1 border-l border-[#808080]">
            <FrontView />
            <ViewLabel className="left-[12px]">*Front</ViewLabel>
          </div>
          <div className="absolute top-[444px] left-0 flex h-[39px] w-[11px] items-center justify-center border border-l-0 border-[#808080] bg-[#f7f7f7]">
            <div className="h-[6px] w-[6px] rounded-full border border-[#999] bg-[#d0d0d0]" />
          </div>
        </div>
        <div className="w-[4px] shrink-0 border-r border-l border-l-[#5f648c] border-r-[#3a3f55] bg-[#dfe3ee]" />
        <div className="flex flex-1 flex-col">
          <div className="relative h-[463px] shrink-0">
            <IsoView />
            <HeadsUp />
            <TaskPane />
            <ViewLabel link={false} className="left-[15px]">*Isometric</ViewLabel>
          </div>
          <HLine />
          <div className="relative flex-1">
            <RightView />
            <ViewLabel className="left-[15px]">*Right</ViewLabel>
          </div>
        </div>
      </div>
      <BottomTabs />
      <StatusBar />
      <div className="h-[2px] shrink-0 bg-[#050a24]" />
    </div>
  );
}
